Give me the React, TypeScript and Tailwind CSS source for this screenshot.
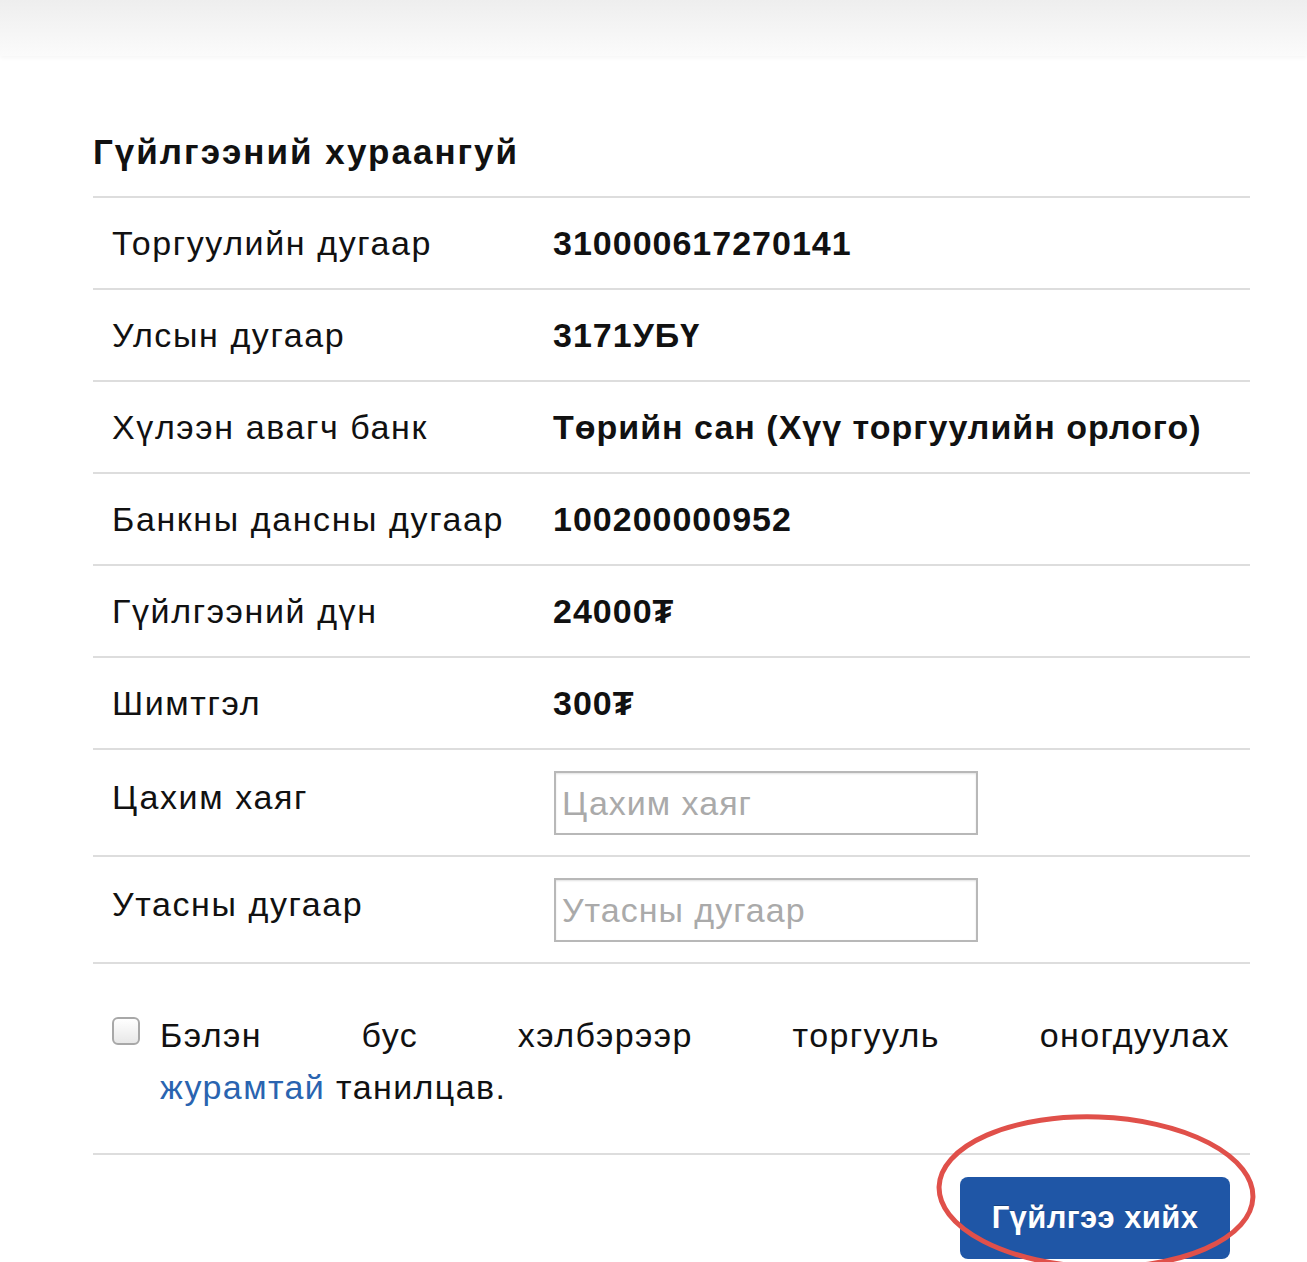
import React from "react";

const rows: { label: string; value: string }[] = [
  { label: "Торгуулийн дугаар", value: "310000617270141" },
  { label: "Улсын дугаар", value: "3171УБҮ" },
  { label: "Хүлээн авагч банк", value: "Төрийн сан (Хүү торгуулийн орлого)" },
  { label: "Банкны дансны дугаар", value: "100200000952" },
  { label: "Гүйлгээний дүн", value: "24000₮" },
  { label: "Шимтгэл", value: "300₮" },
];

const inputs = ["Цахим хаяг", "Утасны дугаар"];

export default function App() {
  return (
    <div
      className="min-h-[1262px] w-[1307px] overflow-hidden bg-white text-[#111]"
      style={{ fontFamily: '"Liberation Sans", Arial, sans-serif' }}
    >
      {/* top bar */}
      <div className="h-[56px] w-full bg-gradient-to-b from-[#eeeeee] to-[#fbfbfb] shadow-[0_2px_4px_rgba(0,0,0,0.04)]" />

      <main className="ml-[93px] mr-[57px] mt-[74px]">
        <h2 className="mb-[22px] text-[35px] font-bold leading-[44px] tracking-[2px]">
          Гүйлгээний хураангуй
        </h2>

        <div className="border-t-2 border-[#dddddd] text-[34px]">
          {rows.map((r) => (
            <div
              key={r.label}
              className="flex h-[92px] items-center border-b-2 border-[#dddddd]"
            >
              <div className="w-[460px] pl-[19px] tracking-[1.6px]">{r.label}</div>
              <div className="font-bold tracking-[1px]">{r.value}</div>
            </div>
          ))}

          {inputs.map((p) => (
            <div
              key={p}
              className="flex h-[107px] items-start border-b-2 border-[#dddddd] pt-[21px]"
            >
              <div className="w-[461px] pl-[19px] pt-[6px] leading-[40px] tracking-[1.6px]">{p}</div>
              <input
                placeholder={p}
                className="h-[64px] w-[424px] border-2 border-[#b8b8b8] px-[6px] text-[34px] tracking-[1px] text-[#555] placeholder:text-[#aaaaaa] shadow-[inset_0_1px_2px_rgba(0,0,0,0.12)] outline-none"
              />
            </div>
          ))}

          <div className="border-b-2 border-[#dddddd] pb-[40px] pl-[19px] pr-[20px] pt-[45px]">
            <div className="flex items-start gap-[20px]">
              <span className="mt-[8px] h-[28px] w-[28px] shrink-0 rounded-[6px] border-2 border-[#a8a8a8] bg-gradient-to-b from-white to-[#e8e8e8]" />
              <div className="flex-1 leading-[52px] tracking-[1.4px]">
                <p className="text-justify [text-align-last:justify]">
                  Бэлэн бус хэлбэрээр торгууль оногдуулах
                </p>
                <p>
                  <a href="#" className="text-[#2a64b0]">
                    журамтай
                  </a>{" "}
                  танилцав.
                </p>
              </div>
            </div>
          </div>
        </div>

        <div className="flex justify-end pr-[20px] pt-[22px]">
          <button className="relative h-[82px] w-[270px] rounded-[8px] bg-[#1f56a6] text-[31px] font-bold tracking-[0.4px] text-white [text-shadow:0_-1px_0_rgba(0,0,0,0.25)]">
            Гүйлгээ хийх
            <svg
              className="pointer-events-none absolute left-[-24px] top-[-62px] overflow-visible"
              width="320"
              height="160"
              viewBox="0 0 320 160"
            >
              <ellipse
                cx="160"
                cy="77"
                rx="157"
                ry="75"
                fill="none"
                stroke="#e0504a"
                strokeWidth="5"
                transform="rotate(2 160 77)"
              />
            </svg>
          </button>
        </div>
      </main>
    </div>
  );
}
